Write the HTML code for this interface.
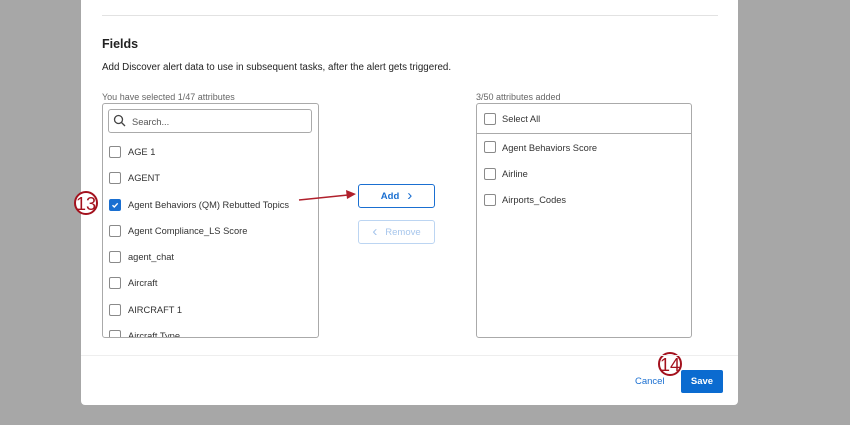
<!DOCTYPE html><html><head><style>
body{margin:0;width:850px;height:425px;background:#a7a7a7;font-family:"Liberation Sans",sans-serif;position:relative;overflow:hidden}
.a{position:absolute}
.m{left:81px;top:-5px;width:657px;height:410px;background:#fff;border-radius:4px}
.cb{position:absolute;width:10px;height:10px;border:1px solid #8a8a8a;border-radius:2px;background:#fff}
.t{position:absolute;font-size:9.3px;color:#333;white-space:nowrap;margin-top:2px}
.box{border:1px solid #aaa;border-radius:3px;background:#fff;overflow:hidden}
</style></head><body>
<div class="a m"></div>
<div class="a" style="left:102px;top:15px;width:616px;height:1px;background:#e2e2e2"></div>
<div class="a" style="left:102px;top:37px;font-size:12.5px;font-weight:bold;color:#222">Fields</div>
<div class="a" style="left:102px;top:62px;font-size:9.8px;color:#222">Add Discover alert data to use in subsequent tasks, after the alert gets triggered.</div>
<div class="a" style="left:102px;top:92px;font-size:9px;color:#666">You have selected 1/47 attributes</div>
<div class="a" style="left:476px;top:92px;font-size:9px;color:#666">3/50 attributes added</div>
<div class="a box" style="left:102px;top:103px;width:215px;height:233px">
 <div class="a" style="left:5px;top:5px;width:202px;height:22px;border:1px solid #aaa;border-radius:3px"></div>
 <svg class="a" style="left:10px;top:10px" width="14" height="14"><circle cx="5.5" cy="5.5" r="4" fill="none" stroke="#444" stroke-width="1.3"/><line x1="8.5" y1="8.5" x2="12" y2="12" stroke="#444" stroke-width="1.3"/></svg>
 <div class="t" style="left:29px;top:11px;color:#555">Search...</div>
</div>
<div class="a" style="left:102px;top:103px;width:217px;height:235px">
 <div class="cb" style="left:7px;top:43px"></div><div class="t" style="left:26px;top:42px">AGE 1</div>
 <div class="cb" style="left:7px;top:69px"></div><div class="t" style="left:26px;top:68px">AGENT</div>
 <div class="cb" style="left:7px;top:96px;background:#1a6fd1;border-color:#1a6fd1"></div>
 <svg class="a" style="left:8px;top:97px" width="10" height="10"><path d="M2.5 5.2L4.3 7 7.7 3.3" fill="none" stroke="#fff" stroke-width="1.4"/></svg>
 <div class="t" style="left:26px;top:95px">Agent Behaviors (QM) Rebutted Topics</div>
 <div class="cb" style="left:7px;top:122px"></div><div class="t" style="left:26px;top:121px">Agent Compliance_LS Score</div>
 <div class="cb" style="left:7px;top:148px"></div><div class="t" style="left:26px;top:147px">agent_chat</div>
 <div class="cb" style="left:7px;top:174px"></div><div class="t" style="left:26px;top:173px">Aircraft</div>
 <div class="cb" style="left:7px;top:201px"></div><div class="t" style="left:26px;top:200px">AIRCRAFT 1</div>
 <div style="position:absolute;left:1px;top:220px;width:214px;height:14px;overflow:hidden"><div class="cb" style="left:6px;top:7px"></div><div class="t" style="left:25px;top:6px">Aircraft Type</div></div>
</div>
<div class="a box" style="left:476px;top:103px;width:214px;height:233px">
 <div class="a" style="left:0;top:29px;width:214px;height:1px;background:#aaa"></div>
 <div class="cb" style="left:7px;top:9px"></div><div class="t" style="left:25px;top:8px">Select All</div>
 <div class="cb" style="left:7px;top:37px"></div><div class="t" style="left:25px;top:37px">Agent Behaviors Score</div>
 <div class="cb" style="left:7px;top:64px"></div><div class="t" style="left:25px;top:63px">Airline</div>
 <div class="cb" style="left:7px;top:90px"></div><div class="t" style="left:25px;top:89px">Airports_Codes</div>
</div>
<div class="a" style="left:358px;top:184px;width:75px;height:22px;border:1px solid #1a6fd1;border-radius:3px;color:#1a6fd1;font-size:9.5px;font-weight:bold;text-align:center;line-height:22px">Add&nbsp;&nbsp;&nbsp;<span style="font-weight:normal;font-size:15px;vertical-align:-1px">&#x203A;</span></div>
<div class="a" style="left:358px;top:220px;width:75px;height:22px;border:1px solid #bcd5f2;border-radius:3px;color:#a7c6ec;font-size:9.5px;text-align:center;line-height:22px"><span style="font-size:15px;vertical-align:-1px">&#x2039;</span>&nbsp;&nbsp;&nbsp;Remove</div>
<svg class="a" style="left:0;top:0" width="850" height="425">
<line x1="299" y1="200" x2="348" y2="195" stroke="#b0202c" stroke-width="1.5"/><path d="M356 194L346 190 347 199Z" fill="#b0202c"/>
<circle cx="86" cy="203" r="11" fill="#fff" stroke="#a3111d" stroke-width="2"/>
<text x="86" y="210" font-size="18" text-anchor="middle" fill="#a3111d" font-family="Liberation Sans">13</text>
<circle cx="670" cy="364" r="11" fill="#fff" stroke="#a3111d" stroke-width="2"/>
<text x="670" y="371" font-size="18" text-anchor="middle" fill="#a3111d" font-family="Liberation Sans">14</text>
</svg>
<div class="a" style="left:81px;top:355px;width:657px;height:1px;background:#eee"></div>
<div class="a" style="left:635px;top:376px;font-size:9.5px;color:#1a6fd1">Cancel</div>
<div class="a" style="left:681px;top:370px;width:42px;height:23px;background:#0b6bd0;border-radius:2px;color:#fff;font-size:9.5px;font-weight:bold;text-align:center;line-height:23px">Save</div>
</body></html>
